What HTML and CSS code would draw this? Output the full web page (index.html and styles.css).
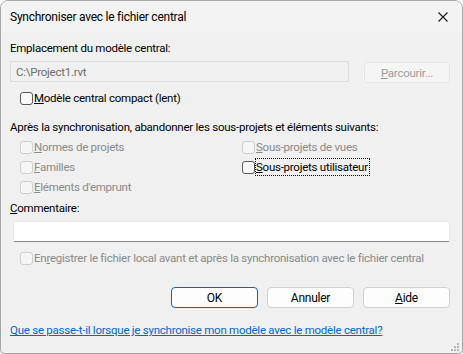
FILE: index.html
```html
<!DOCTYPE html>
<html lang="fr">
<head>
    <meta charset="UTF-8">
    <title>Synchroniser avec le fichier central</title>
    <link rel="stylesheet" href="styles.css">
</head>
<body>
    <div class="dialog">
        <div class="titlebar">
            <span class="title">Synchroniser avec le fichier central</span>
            <svg class="close" width="10" height="10" viewBox="0 0 10 10">
                <path d="M0.5 0.5 L9.5 9.5 M9.5 0.5 L0.5 9.5" stroke="#1a1a1a" stroke-width="1.1" fill="none"/>
            </svg>
        </div>

        <div class="content">
            <div class="label">Emplacement du modèle central:</div>
            <div class="path-row">
                <div class="textbox disabled">C:\Project1.rvt</div>
                <button class="btn btn-browse" disabled><u>P</u>arcourir...</button>
            </div>

            <label class="check compact"><span class="box"></span><span><u>M</u>odèle central compact (lent)</span></label>

            <div class="label after">Après la synchronisation, abandonner les sous-projets et éléments suivants:</div>
            <div class="options">
                <label class="check off"><span class="box"></span><span><u>N</u>ormes de projets</span></label>
                <label class="check off"><span class="box"></span><span><u>S</u>ous-projets de vues</span></label>
                <label class="check off"><span class="box"></span><span><u>F</u>amilles</span></label>
                <label class="check"><span class="box"></span><span class="focus"><u>S</u>ous-projets utilisateur</span></label>
                <label class="check off"><span class="box"></span><span><u>E</u>léments d'emprunt</span></label>
            </div>

            <div class="label comment-label"><u>C</u>ommentaire:</div>
            <div class="comment-box"></div>

            <label class="check off save"><span class="box"></span><span>En<u>r</u>egistrer le fichier local avant et après la synchronisation avec le fichier central</span></label>

            <div class="buttons">
                <button class="btn btn-default">OK</button>
                <button class="btn">Annuler</button>
                <button class="btn"><u>A</u>ide</button>
            </div>

            <a class="help-link" href="#">Que se passe-t-il lorsque je synchronise mon modèle avec le modèle central?</a>
        </div>

        <div class="grip">
            <svg width="9" height="9" viewBox="0 0 9 9">
                <rect x="6" y="0" width="2" height="2" fill="#b4b4b4"/>
                <rect x="3" y="3" width="2" height="2" fill="#b4b4b4"/>
                <rect x="6" y="3" width="2" height="2" fill="#b4b4b4"/>
                <rect x="0" y="6" width="2" height="2" fill="#b4b4b4"/>
                <rect x="3" y="6" width="2" height="2" fill="#b4b4b4"/>
                <rect x="6" y="6" width="2" height="2" fill="#b4b4b4"/>
            </svg>
        </div>
    </div>
</body>
</html>
```

FILE: styles.css
```css
/* Basic reset */
* {
    margin: 0;
    padding: 0;
    box-sizing: border-box;
}

body {
    width: 463px;
    height: 354px;
    background-color: #ffffff;
    font-family: 'Roboto', 'Noto Sans', sans-serif;
    font-size: 11.5px;
    letter-spacing: -0.25px;
    color: #000;
}

/* Window frame */
.dialog {
    position: relative;
    width: 463px;
    height: 354px;
    background-color: #f0f0f0;
    border: 1px solid #a8a8a8;
    border-radius: 8px 8px 4px 4px;
    overflow: hidden;
}

.titlebar {
    display: flex;
    align-items: center;
    justify-content: space-between;
    height: 31px;
    padding: 0 14px 0 9px;
    background-color: #f3f3f3;
}

.title {
    font-size: 12px;
    line-height: 16px;
}

.close {
    display: block;
}

/* Main area */
.content {
    padding: 8px 12px 0 9px;
}

.label {
    line-height: 16px;
}

.path-row {
    display: flex;
    justify-content: space-between;
    margin-top: 5px;
}

.textbox {
    width: 339px;
    height: 21px;
    padding: 2px 5px;
    line-height: 16px;
    border: 1px solid #dcdcdc;
    background-color: #f0f0f0;
}

.textbox.disabled {
    color: #6d6d6d;
}

/* Buttons */
.btn {
    width: 87px;
    height: 21px;
    font-family: inherit;
    font-size: 12px;
    letter-spacing: inherit;
    color: #000;
    background-color: #fdfdfd;
    border: 1px solid #d0d0d0;
    border-radius: 4px;
}

.btn-browse {
    margin-top: 1px;
    width: 86px;
    font-size: 11.5px;
    color: #9d9d9d;
    background-color: #f5f5f5;
    border-color: #e6e6e6;
}

.btn-default {
    border-color: #0067c0;
}

/* Checkboxes */
.check {
    display: flex;
    align-items: center;
    gap: 1px;
    height: 20px;
    padding-left: 10px;
    line-height: 16px;
}

.box {
    flex: none;
    width: 13px;
    height: 13px;
    border: 1px solid #5a5a5a;
    border-radius: 3px;
    background-color: #f7f7f7;
}

.check.off {
    color: #8a8a8a;
}

.check.off .box {
    border-color: #cfcfcf;
    background-color: #f5f5f5;
}

.focus {
    outline: 1px dotted #000;
    outline-offset: 0;
    padding-right: 1px;
}

.compact {
    margin-top: 5px;
}

.after {
    margin-top: 11px;
}

.options {
    display: grid;
    grid-template-columns: 222px 1fr;
    margin-top: 2px;
}

.comment-label {
    margin-top: 3px;
}

.comment-box {
    height: 21px;
    margin: 5px 0 0 3px;
    background-color: #fff;
    border: 1px solid #e8e8e8;
    border-bottom-color: #8a8a8a;
    border-radius: 2px;
}

.save {
    margin-top: 6px;
}

.buttons {
    display: flex;
    justify-content: flex-end;
    gap: 9px;
    margin-top: 19px;
}

.help-link {
    display: block;
    margin-top: 14px;
    line-height: 16px;
    color: #0066cc;
}

.grip {
    position: absolute;
    right: 2px;
    bottom: 1px;
    line-height: 0;
}
```
